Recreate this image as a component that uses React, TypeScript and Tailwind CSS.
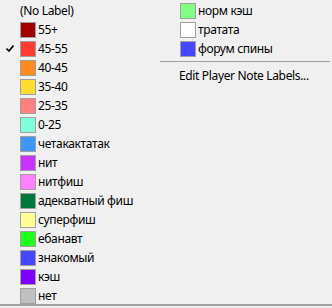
const left = [
  { label: "55+", color: "#a00000" },
  { label: "45-55", color: "#ff3a30", checked: true },
  { label: "40-45", color: "#ff8a1e" },
  { label: "35-40", color: "#ffdc32" },
  { label: "25-35", color: "#ff8080" },
  { label: "0-25", color: "#80ffdc" },
  { label: "четакактатак", color: "#3c96ff" },
  { label: "нит", color: "#c832ff" },
  { label: "нитфиш", color: "#ff80ff" },
  { label: "адекватный фиш", color: "#007a3c" },
  { label: "суперфиш", color: "#ffff96" },
  { label: "ебанавт", color: "#1eff1e" },
  { label: "знакомый", color: "#4646ff" },
  { label: "кэш", color: "#8000ff" },
  { label: "нет", color: "#c0c0c0" },
];

const right = [
  { label: "норм кэш", color: "#80ff80" },
  { label: "тратата", color: "#ffffff" },
  { label: "форум спины", color: "#4646ff" },
];

function Check() {
  return (
    <svg width="8" height="7" viewBox="0 0 8 7">
      <path d="M0.5 3.5 L3 6 L7.5 0.5" fill="none" stroke="#000" strokeWidth="1.6" />
    </svg>
  );
}

function Row({ label, color, checked }: { label: string; color: string; checked?: boolean }) {
  return (
    <div className="flex h-[19px] items-center">
      <div className="flex w-[20px] justify-center pr-[1px]">{checked && <Check />}</div>
      <span
        className="h-[16px] w-[16px] shrink-0 border border-[#a0a0a0]"
        style={{ background: color }}
      />
      <span className="pl-[2px] leading-none">{label}</span>
    </div>
  );
}

export default function App() {
  return (
    <div
      className="h-[308px] w-[332px] overflow-hidden bg-[#f0f0f0] text-[12px] tracking-[-0.35px] text-black"
      style={{ fontFamily: '"Noto Sans", "Open Sans", sans-serif' }}
    >
      <div className="flex h-[306px] border-b-2 border-[#a0a0a0] pt-[1px]">
        <div className="w-[160px]">
          <div className="flex h-[19px] items-center pl-[20px] leading-none">(No Label)</div>
          {left.map((r) => (
            <Row key={r.label} {...r} />
          ))}
        </div>
        <div className="flex-1 pr-[2px]">
          {right.map((r) => (
            <Row key={r.label} {...r} />
          ))}
          <div className="pt-[3px] pb-[4px]">
            <div className="h-px bg-[#a0a0a0]" />
          </div>
          <div className="flex h-[19px] items-center pl-[19px] leading-none">
            Edit Player Note Labels...
          </div>
        </div>
      </div>
    </div>
  );
}
